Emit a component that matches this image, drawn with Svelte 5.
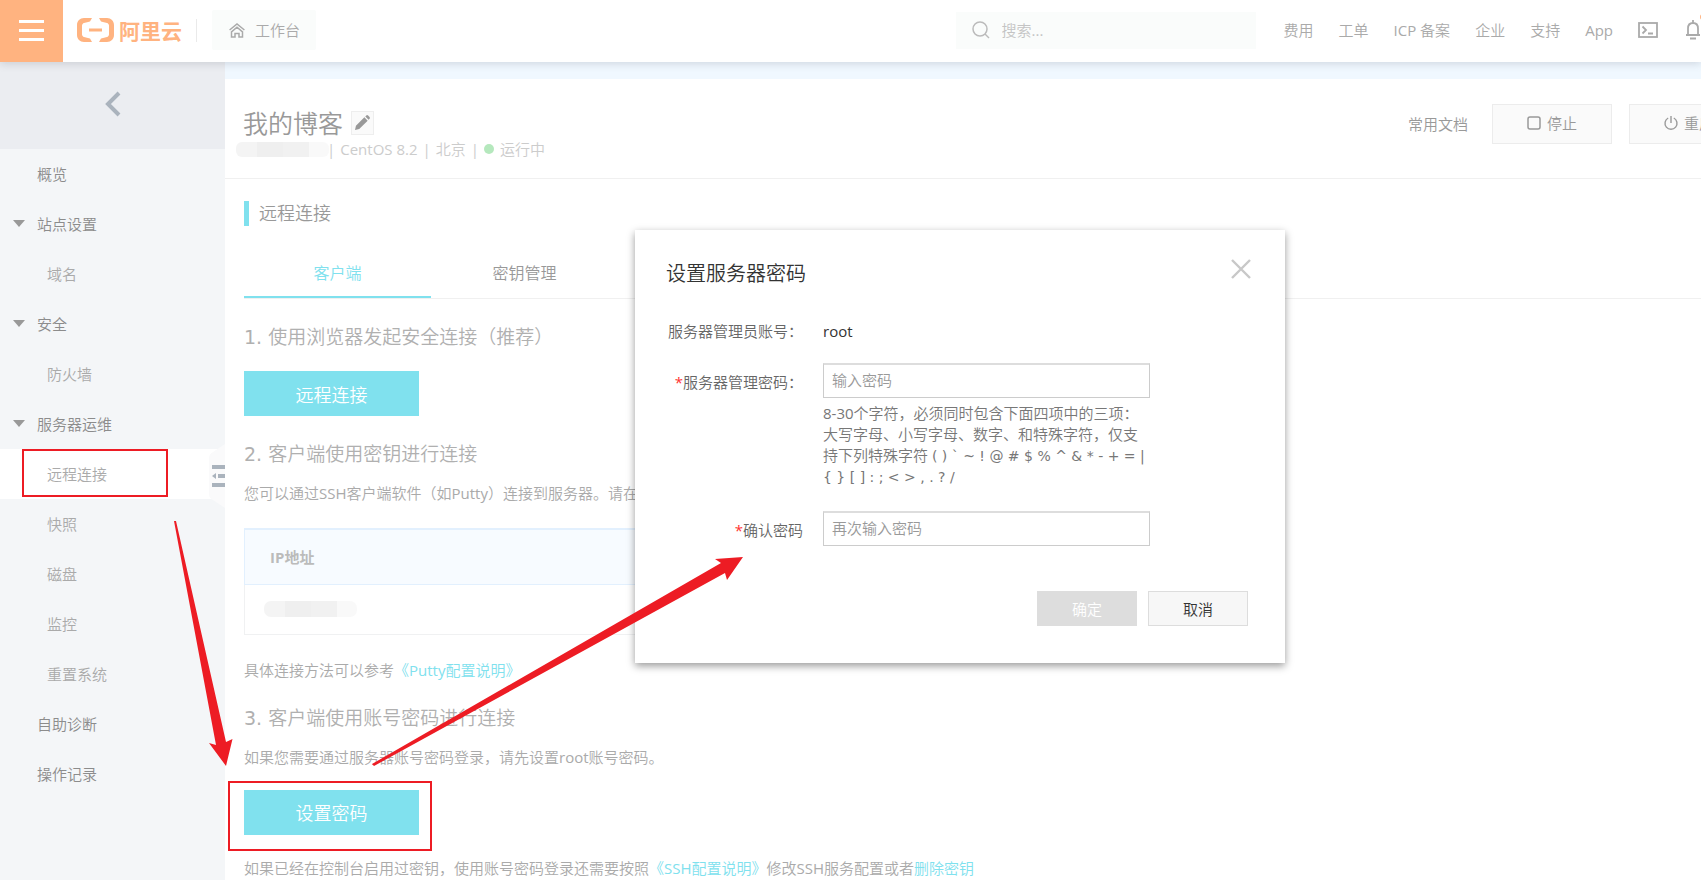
<script>
  let password = $state('')
  let confirmPassword = $state('')
  let modalOpen = $state(true)
  let activeTab = $state('client')

  const canSubmit = $derived(password.length >= 8 && password === confirmPassword)

  const topLinks = ['费用', '工单', 'ICP 备案', '企业', '支持', 'App']

  const menu = [
    { label: '概览' },
    { label: '站点设置', group: true },
    { label: '域名', child: true },
    { label: '安全', group: true },
    { label: '防火墙', child: true },
    { label: '服务器运维', group: true },
    { label: '远程连接', child: true, active: true },
    { label: '快照', child: true },
    { label: '磁盘', child: true },
    { label: '监控', child: true },
    { label: '重置系统', child: true },
    { label: '自助诊断' },
    { label: '操作记录' },
  ]

  const tabs = [
    { id: 'client', label: '客户端' },
    { id: 'keys', label: '密钥管理' },
  ]
</script>

<div class="page">
  <header class="topbar">
    <button class="burger" aria-label="菜单">
      <span></span><span></span><span></span>
    </button>
    <a class="logo" href="#home">
      <svg width="37" height="24" viewBox="0 0 37 24" fill="#ffb380" aria-hidden="true">
        <path d="M15 0H7C3 0 0 3 0 7v10c0 4 3 7 7 7h8l-2-3.500-6-1.500c-1-.3-2-1.300-2-2.500v-9C5 6.300 6 5.300 7 5l6-1.500z" />
        <path d="M22 0h8c4 0 7 3 7 7v10c0 4-3 7-7 7h-8l2-3.500 6-1.500c1-.3 2-1.300 2-2.500v-9c0-1.200-1-2.200-2-2.500l-6-1.500z" />
        <rect x="12" y="10.500" width="13" height="3" />
      </svg>
      <span>阿里云</span>
    </a>
    <span class="divider"></span>
    <a class="workbench" href="#workbench">
      <svg width="16" height="15" viewBox="0 0 16 15" fill="none" stroke="#aaa" stroke-width="1.500">
        <path d="M.6 7L8 1l7.400 6" />
        <path d="M2.500 8.800V14H6v-3.500h4V14h3.500V8.800L8 4.200z" />
      </svg>
      工作台
    </a>
    <label class="search">
      <svg width="18" height="18" viewBox="0 0 18 18" fill="none" stroke="#bbb" stroke-width="1.500">
        <circle cx="8" cy="8" r="7" />
        <path d="M13 13l4 4" />
      </svg>
      <input type="text" placeholder="搜索..." aria-label="搜索" />
    </label>
    <nav class="top-links">
      {#each topLinks as link}
        <a href="#{link}">{link}</a>
      {/each}
      <button class="icon-btn" aria-label="命令行">
        <svg width="20" height="16" viewBox="0 0 20 16" fill="none" stroke="#aaa" stroke-width="1.800">
          <rect x="1" y="1" width="18" height="14" />
          <path d="M4.500 4.500L8 8l-3.500 3.500M10 11.500h5" />
        </svg>
      </button>
      <button class="icon-btn bell" aria-label="消息">
        <svg width="16" height="20" viewBox="0 0 16 20" fill="none" stroke="#aaa" stroke-width="1.800">
          <path d="M1 15h14M3 15V8.500C3 5 5 3 8 3s5 2 5 5.500V15M8 0v3M5 18.500h6" />
          <circle cx="18" cy="-3" r="3" fill="#ffb380" stroke="none" />
        </svg>
      </button>
    </nav>
  </header>

  <div class="body">
    <aside class="sidebar">
      <button class="back" aria-label="返回">
        <svg width="16" height="26" viewBox="0 0 16 26" fill="none" stroke="#aab3bd" stroke-width="4">
          <path d="M14 2L3 13l11 11" />
        </svg>
      </button>
      <nav>
        {#each menu as item}
          <a href="#{item.label}" class="item" class:child={item.child} class:active={item.active}>
            {#if item.group}
              <svg class="caret" width="12" height="7" viewBox="0 0 12 7" fill="#999"><path d="M0 0h12L6 7z" /></svg>
            {/if}
            {item.label}
          </a>
        {/each}
      </nav>
      <button class="fold" aria-label="收起">
        <svg width="16" height="64" viewBox="0 0 16 64">
          <path d="M16 0L4 8Q0 10 0 14V50Q0 54 4 56L16 64z" fill="#fafafb" />
          <path d="M3 23h13M9 32h7M3 41h13" stroke="#aab3bd" stroke-width="4" />
          <path d="M3 32l4-3v6z" fill="#aab3bd" />
        </svg>
      </button>
    </aside>

    <main class="main">
      <div class="strip"></div>
      <div class="server-head">
        <div class="server-info">
          <div class="server-name">
            <h1>我的博客</h1>
            <button class="edit" aria-label="编辑">
              <svg width="15" height="15" viewBox="0 0 16 16" fill="#999">
                <path d="M0 16l1-4.500L10 2.500 13.500 6 4.500 15zM11 1.500L12 .5q1-1 2 0l1.500 1.500q1 1 0 2l-1 1z" />
              </svg>
            </button>
          </div>
          <div class="meta">
            <span class="masked name-mask"></span>
            <span>|</span>
            <span>CentOS 8.2</span>
            <span>|</span>
            <span>北京</span>
            <span>|</span>
            <span class="status"><i></i>运行中</span>
          </div>
        </div>
        <div class="actions">
          <a href="#docs">常用文档</a>
          <button>
            <svg width="14" height="14" viewBox="0 0 14 14" fill="none" stroke="#999" stroke-width="1.500">
              <rect x="1" y="1" width="12" height="12" rx="2" />
            </svg>
            停止
          </button>
          <button>
            <svg width="14" height="14" viewBox="0 0 14 14" fill="none" stroke="#999" stroke-width="1.400">
              <path d="M4.200 2A6 6 0 1 0 9.800 2M7 0v7" />
            </svg>
            重启
          </button>
        </div>
      </div>

      <section class="content">
        <h2>远程连接</h2>
        <div class="tabs" role="tablist">
          {#each tabs as tab}
            <button role="tab" aria-selected={activeTab === tab.id} class:on={activeTab === tab.id} onclick={() => (activeTab = tab.id)}>
              {tab.label}
            </button>
          {/each}
        </div>

        <h3>1. 使用浏览器发起安全连接（推荐）</h3>
        <button class="primary connect">远程连接</button>

        <h3>2. 客户端使用密钥进行连接</h3>
        <p class="lead">您可以通过SSH客户端软件（如Putty）连接到服务器。请在</p>
        <table>
          <thead>
            <tr><th>IP地址</th></tr>
          </thead>
          <tbody>
            <tr><td><span class="masked ip-mask"></span></td></tr>
          </tbody>
        </table>
        <p>具体连接方法可以参考<a href="#putty">《Putty配置说明》</a></p>

        <h3>3. 客户端使用账号密码进行连接</h3>
        <p class="lead">如果您需要通过服务器账号密码登录，请先设置root账号密码。</p>
        <button class="primary" onclick={() => (modalOpen = true)}>设置密码</button>
        <p>如果已经在控制台启用过密钥，使用账号密码登录还需要按照<a href="#ssh">《SSH配置说明》</a>修改SSH服务配置或者<a href="#delete">删除密钥</a></p>
      </section>
    </main>
  </div>

  {#if modalOpen}
    <div class="backdrop">
      <div class="modal" role="dialog" aria-labelledby="modal-title">
        <div class="modal-head">
          <h4 id="modal-title">设置服务器密码</h4>
          <button class="close" aria-label="关闭" onclick={() => (modalOpen = false)}>
            <svg width="20" height="20" viewBox="0 0 20 20" stroke="#c8c8c8" stroke-width="2.400"><path d="M1 1l18 18M19 1L1 19" /></svg>
          </button>
        </div>
        <div class="row account">
          <span class="label">服务器管理员账号：</span>
          <span class="value">root</span>
        </div>
        <div class="row">
          <label class="label" for="pwd"><em>*</em>服务器管理密码：</label>
          <div class="field">
            <input id="pwd" type="password" placeholder="输入密码" bind:value={password} />
            <div class="help">
              8-30个字符，必须同时包含下面四项中的三项：<br />
              大写字母、小写字母、数字、和特殊字符，仅支<br />
              持下列特殊字符 <span class="symbols">( ) ` ~ ! @ # $ % ^ &amp; * - + = |</span><br />
              <span class="symbols">{'{ } [ ] : ; < > , . ? /'}</span>
            </div>
          </div>
        </div>
        <div class="row">
          <label class="label" for="pwd2"><em>*</em>确认密码</label>
          <div class="field">
            <input id="pwd2" type="password" placeholder="再次输入密码" bind:value={confirmPassword} />
          </div>
        </div>
        <div class="modal-foot">
          <button class="ok" disabled={!canSubmit}>确定</button>
          <button class="cancel" onclick={() => (modalOpen = false)}>取消</button>
        </div>
      </div>
    </div>
  {/if}

  <!-- walkthrough marks: menu entry -> button -> dialog -->
  <svg class="marks" aria-hidden="true">
    <g fill="none" stroke="#ed1c24" stroke-width="2">
      <rect x="23" y="450" width="144" height="46" />
      <rect x="229" y="782" width="202" height="68" />
    </g>
    <g fill="#ed1c24">
      <path d="M174 521h2L226 742l6.500-3L226 766 209 743l7 2z" />
      <path d="M372 764L721 563l-6-4 28-2-16 23-2-7L374 766z" />
    </g>
  </svg>
</div>

<style>
  :global(body) {
    background: #fff;
  }

  .page {
    position: relative;
    min-height: 100vh;
    overflow: hidden;
    display: flex;
    flex-direction: column;
    font-family: 'Open Sans', 'Noto Sans CJK SC DemiLight', 'Noto Sans CJK SC', sans-serif;
    font-size: 15px;
    line-height: 22px;
    color: #aaa;
  }
  .page * {
    box-sizing: border-box;
  }
  button, input {
    font: inherit;
    color: inherit;
    border: 0;
    padding: 0;
    background: none;
  }
  button {
    cursor: pointer;
  }
  a {
    color: inherit;
    text-decoration: none;
  }
  h1, h2, h3, h4, p {
    margin: 0;
    font-weight: 400;
  }
  svg {
    display: block;
    flex-shrink: 0;
    overflow: visible;
  }

  .topbar {
    position: relative;
    z-index: 1;
    display: flex;
    align-items: center;
    height: 62px;
    padding-bottom: 2px;
    background: #fff;
    box-shadow: 0 2px 8px rgba(60, 70, 90, 0.18);
  }
  .burger {
    align-self: flex-start;
    width: 63px;
    height: 62px;
    background: #ffb380;
    display: flex;
    flex-direction: column;
    align-items: center;
    justify-content: center;
    gap: 6px;
    padding-bottom: 2px;
  }
  .burger span {
    width: 25px;
    height: 3px;
    background: #fff;
  }
  .logo {
    display: flex;
    align-items: center;
    gap: 5px;
    margin-left: 14px;
    color: #ffb380;
    font-family: 'Noto Sans CJK SC', sans-serif;
    font-size: 21px;
    font-weight: 700;
  }
  .divider {
    width: 1px;
    height: 23px;
    margin: 0 15px 0 14px;
    background: #eaeaea;
  }
  .workbench {
    display: flex;
    align-items: center;
    gap: 10px;
    height: 40px;
    padding: 0 16px 0 17px;
    background: #fafcfb;
    border-radius: 2px;
  }
  .search {
    display: flex;
    align-items: center;
    gap: 12px;
    width: 300px;
    height: 37px;
    margin-left: auto;
    padding: 0 16px;
    background: #fafcfb;
  }
  .search input {
    flex: 1;
    min-width: 0;
    outline: none;
  }
  .search input::placeholder {
    color: #c4c4c4;
    opacity: 1;
  }
  .top-links {
    display: flex;
    align-items: center;
    gap: 25px;
    margin-left: 28px;
  }
  .bell {
    margin-left: 2px;
  }

  .body {
    flex: 1;
    display: flex;
  }
  .sidebar {
    position: relative;
    width: 225px;
    flex-shrink: 0;
    background: #f4f6f8;
  }
  .back {
    display: flex;
    align-items: center;
    justify-content: center;
    width: 100%;
    height: 87px;
    padding-bottom: 3px;
    background: #ebedf1;
  }
  .item {
    position: relative;
    display: block;
    padding-left: 37px;
    line-height: 50px;
    color: #8c8c8c;
  }
  .item.child {
    padding-left: 47px;
    color: #aaa;
  }
  .item.active {
    background: #fff;
  }
  .caret {
    position: absolute;
    left: 13px;
    top: 21px;
  }
  .fold {
    position: absolute;
    right: 0;
    top: 382px;
  }

  .main {
    flex: 1;
    min-width: 0;
  }
  .strip {
    height: 17px;
    background: #f0f8ff;
  }
  .server-head {
    display: flex;
    justify-content: space-between;
    height: 100px;
    padding: 25px 0 0 18px;
    border-bottom: 1px solid #f0f0f0;
  }
  .server-name {
    display: flex;
    align-items: center;
    gap: 8px;
    height: 37px;
    color: #999;
  }
  .server-name h1 {
    font-size: 25px;
    line-height: 36px;
  }
  .edit {
    display: flex;
    align-items: center;
    justify-content: center;
    width: 23px;
    height: 24px;
    background: #fafafa;
    border: 1px solid #eee;
  }
  .meta {
    display: flex;
    align-items: center;
    gap: 5px;
    margin-left: -7px;
    line-height: 16px;
    color: #ccc;
  }
  .masked {
    display: block;
    background: linear-gradient(90deg, #f4f4f4 0 23%, #efefef 23% 51%, #f1f1f1 51% 79%, #f9f9f9 79%);
  }
  .name-mask {
    width: 93px;
    height: 15px;
    margin-right: -7px;
    border-radius: 6px;
  }
  .status {
    display: flex;
    align-items: center;
    gap: 6px;
  }
  .status i {
    width: 10px;
    height: 10px;
    border-radius: 50%;
    background: #b5e8bd;
  }
  .actions {
    display: flex;
    align-items: center;
    gap: 17px;
    height: 40px;
    margin-right: -48px;
    color: #999;
  }
  .actions a {
    margin-right: 7px;
  }
  .actions button {
    display: flex;
    align-items: center;
    justify-content: center;
    gap: 6px;
    width: 120px;
    height: 40px;
    padding-bottom: 2px;
    background: #fafafa;
    border: 1px solid #ececec;
  }

  .content {
    padding: 22px 0 0 19px;
  }
  .content h2 {
    padding-left: 10px;
    border-left: 5px solid #80e1ee;
    font-size: 18px;
    line-height: 25px;
    color: #999;
  }
  .tabs {
    display: flex;
    height: 51px;
    margin: 22px 0 23px;
    border-bottom: 1px solid #f0f0f0;
  }
  .tabs button {
    width: 187px;
    padding-top: 2px;
    font-size: 16px;
    color: #999;
    border-bottom: 2px solid transparent;
  }
  .tabs .on {
    color: #80e1ee;
    border-color: #80e1ee;
  }
  .content h3 {
    margin-top: 22px;
    font-family: 'DejaVu Sans', 'Noto Sans CJK SC DemiLight', 'Noto Sans CJK SC', sans-serif;
    font-size: 19px;
    line-height: 30px;
    color: #b0b0b0;
  }
  .content .connect + h3 {
    margin-top: 23px;
  }
  .content p {
    margin-top: 22px;
    white-space: nowrap;
  }
  .content .lead {
    margin-top: 13px;
  }
  .content p a {
    color: #80e1ee;
  }
  .primary {
    display: block;
    width: 175px;
    height: 45px;
    margin-top: 22px;
    padding-top: 2px;
    background: #80e1ee;
    color: #fff;
    font-size: 18px;
  }
  .connect {
    margin-top: 19px;
  }

  table {
    width: 900px;
    margin: 24px 0;
    border-collapse: collapse;
  }
  th {
    height: 55px;
    padding: 0 25px;
    text-align: left;
    font-family: 'Open Sans', 'Noto Sans CJK SC', sans-serif;
    font-weight: 700;
    color: #bbb;
    background: #f7fbff;
    border: 1px solid #e2f0fe;
    border-top-width: 2px;
  }
  td {
    height: 50px;
    padding: 0 19px;
    border: 1px solid #f0f1f2;
  }
  .ip-mask {
    width: 93px;
    height: 16px;
    border-radius: 7px;
  }

  .backdrop {
    position: absolute;
    inset: 0;
    z-index: 2;
    display: flex;
    justify-content: center;
    align-items: flex-start;
    padding: 230px 0 0 219px;
  }
  .modal {
    width: 650px;
    padding: 29px 34px 37px 31px;
    background: #fff;
    color: #666;
    box-shadow: 0 3px 8px rgba(0, 0, 0, 0.4);
  }
  .modal-head {
    display: flex;
    justify-content: space-between;
    align-items: flex-start;
    margin-bottom: 27px;
  }
  .modal-head h4 {
    font-size: 20px;
    line-height: 30px;
    color: #333;
  }
  .row {
    display: flex;
    gap: 20px;
    margin-bottom: 24px;
  }
  .row.account {
    margin-bottom: 17px;
  }
  .account .label, .account .value {
    padding: 0;
    line-height: 30px;
  }
  .value {
    color: #333;
  }
  .label {
    width: 137px;
    padding-top: 8px;
    text-align: right;
    white-space: nowrap;
  }
  .label em {
    font-style: normal;
    color: #f33;
  }
  .field {
    width: 327px;
  }
  .field input {
    display: block;
    width: 100%;
    height: 35px;
    padding: 0 8px 2px;
    border: 1px solid #ccc;
    border-top: 2px solid #ddd;
    outline: none;
  }
  .field input::placeholder {
    color: #999;
    opacity: 1;
  }
  .help {
    margin-top: 5px;
    line-height: 21px;
    color: #777;
    white-space: nowrap;
  }
  .symbols {
    font-family: 'DejaVu Sans', sans-serif;
    font-size: 14px;
    line-height: 16px;
  }
  .modal-foot {
    display: flex;
    justify-content: flex-end;
    gap: 11px;
    margin-top: 45px;
    padding-right: 3px;
  }
  .modal-foot button {
    width: 100px;
    height: 35px;
  }
  .modal-foot .ok {
    background: #ddd;
    color: #fff;
    cursor: default;
  }
  .modal-foot .cancel {
    background: #f7f7f7;
    border: 1px solid #ddd;
    color: #333;
  }

  .marks {
    position: absolute;
    left: 0;
    top: 0;
    z-index: 3;
    width: 100%;
    height: 100%;
    pointer-events: none;
  }
</style>
